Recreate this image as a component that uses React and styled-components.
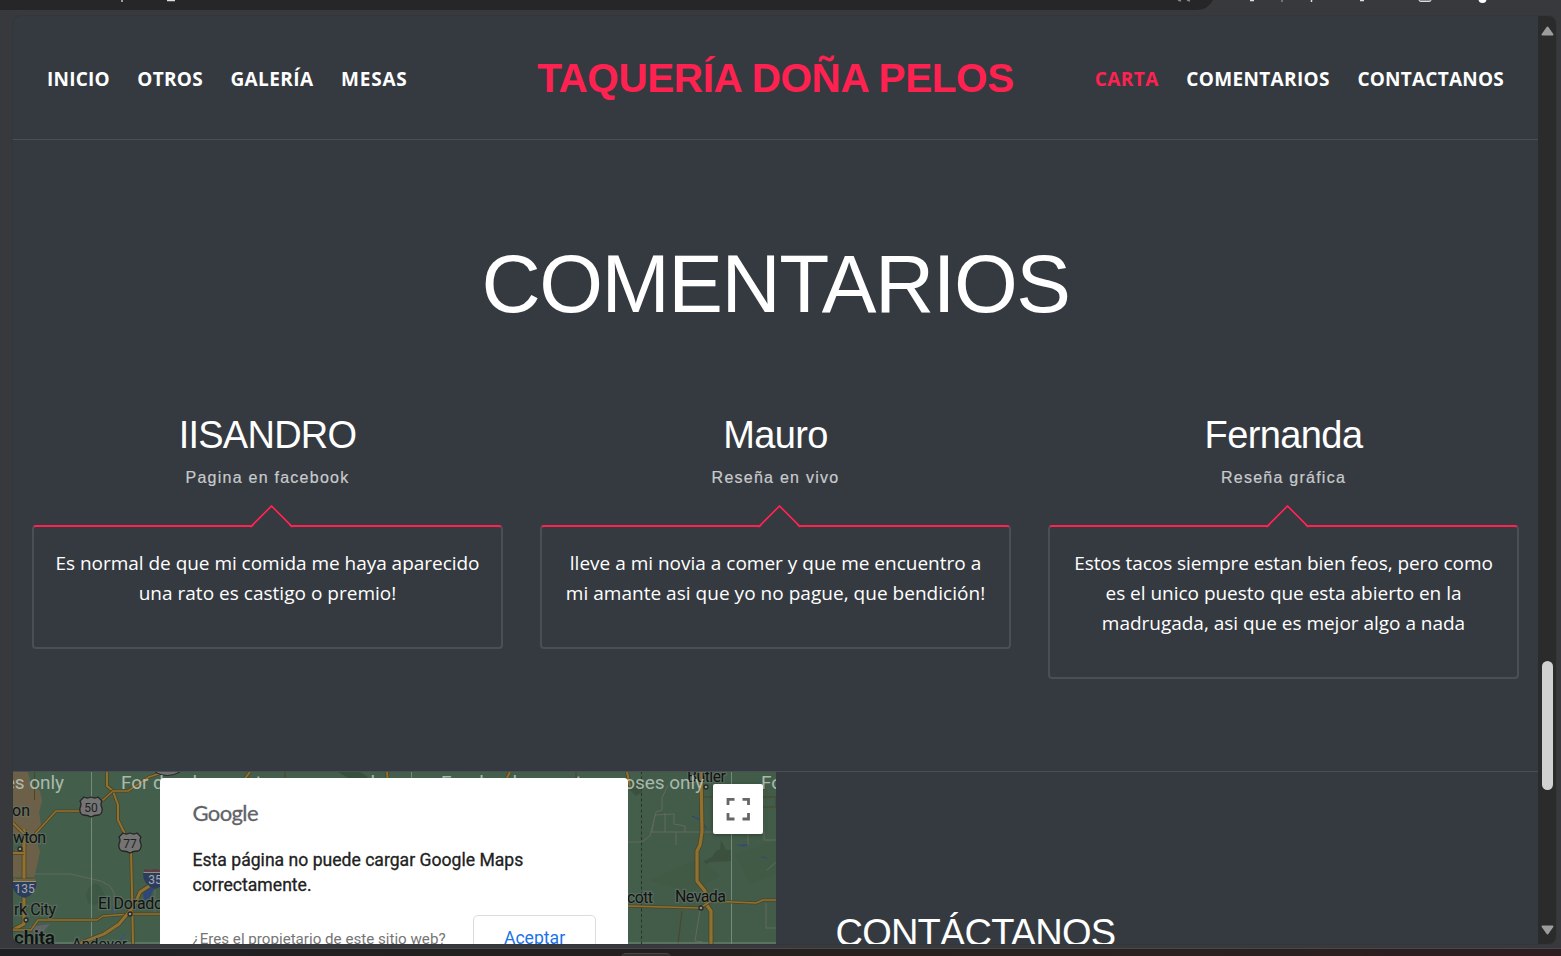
import React from "react";
import styled, { createGlobalStyle } from "styled-components";

const Global = createGlobalStyle`
  * { box-sizing: border-box; }
  html, body { margin: 0; padding: 0; overflow: hidden; background: #38393c; }
`;

const Browser = styled.div`
  width: 1561px;
  height: 956px;
  display: flex;
  flex-direction: column;
  background: #38393c;
  overflow: hidden;
`;
const Toolbar = styled.div`
  height: 16px;
  flex: none;
  svg { display: block; }
`;
const Frame = styled.div`
  height: 928px;
  flex: none;
  margin: 0 5px 0 13px;
  display: flex;
  border-radius: 8px;
  overflow: hidden;
  background: #353a41;
  box-shadow: 0 0 0 1px #33363a;
`;
const Page = styled.div`
  width: 1525px;
  flex: none;
  display: flex;
  flex-direction: column;
  overflow: hidden;
  color: #fff;
  font-family: "Open Sans", "Noto Sans", sans-serif;
`;
const ScrollTrack = styled.div`
  width: 18px;
  flex: none;
  display: flex;
  flex-direction: column;
  align-items: center;
  background: #2b2b2b;
  padding: 10px 0 9px;
`;
const ScrollThumb = styled.div`
  width: 11px;
  height: 129px;
  margin: 625px 0 auto;
  border-radius: 6px;
  background: #d1d1d1;
`;
const Taskbar = styled.div`
  margin-top: 4px;
  height: 8px;
  flex: none;
  display: flex;
  padding-left: 621px;
  background: linear-gradient(90deg, #1f2024 0%, #231f1e 35%, #2a2120 75%, #2d1c20 100%);
  border-top: 1px solid #48474a;
`;
const TaskItem = styled.div`
  width: 50px;
  height: 8px;
  margin-top: 4px;
  border-radius: 5px 5px 0 0;
  background: #33302f;
  border-top: 1px solid #4b4746;
`;

const Header = styled.header`
  height: 124px;
  flex: none;
  display: flex;
  align-items: center;
  justify-content: space-between;
  padding: 2px 34px 0;
  border-bottom: 1px solid #4a4f57;
`;
const Nav = styled.nav`
  display: flex;
  gap: 27.6px;
  width: 430px;
  justify-content: ${(p) => (p.$end ? "flex-end" : "flex-start")};
`;
const NavLink = styled.a`
  font-size: 19px;
  line-height: 30px;
  font-weight: 700;
  white-space: nowrap;
  letter-spacing: ${(p) => p.$track || 0}px;
  color: ${(p) => (p.$active ? "#ff214f" : "#fff")};
`;
const Brand = styled.h1`
  margin: 0 0 1px;
  font: 700 40.5px/48px "Liberation Sans", Arial, sans-serif;
  letter-spacing: -0.42px;
  color: #ff214f;
  white-space: nowrap;
`;

const Comments = styled.section`
  height: 632px;
  flex: none;
  border-bottom: 1px solid #4a4f57;
  padding: 96px 0 0;
`;
const Title = styled.h2`
  margin: 0;
  text-align: center;
  font: 400 82px/96px "Liberation Sans", Arial, sans-serif;
  letter-spacing: -1.5px;
`;
const Grid = styled.div`
  display: grid;
  grid-template-columns: repeat(3, 471px);
  gap: 37px;
  align-items: start;
  margin: 80px 0 0 19px;
`;
const Review = styled.article`
  text-align: center;
`;
const Author = styled.h3`
  margin: 0;
  font: 400 38px/46px "Liberation Sans", Arial, sans-serif;
  letter-spacing: ${(p) => p.$track}px;
`;
const Source = styled.p`
  margin: 8px 0 35px;
  font: 400 16px/24px "Liberation Sans", Arial, sans-serif;
  letter-spacing: 1.25px;
  color: #c8cacc;
  -webkit-text-stroke: 0.2px #c8cacc;
`;
const Bubble = styled.div`
  position: relative;
  padding: 21px 14px 39px;
  border: 2px solid #4a4f57;
  border-top-color: #ff214f;
  border-radius: 4px;
  &::before {
    content: "";
    position: absolute;
    left: 222px;
    top: -16.2px;
    width: 29px;
    height: 29px;
    transform: rotate(45deg);
    border-top: 2px solid #ff214f;
    border-left: 2px solid #ff214f;
    border-top-left-radius: 2px;
    background: linear-gradient(135deg, #353a41 60%, transparent 60%);
  }
`;
const Line = styled.span`
  display: block;
  position: relative;
  font-size: 19px;
  line-height: 30px;
  white-space: nowrap;
  letter-spacing: ${(p) => p.$track || 0}px;
`;

const Contact = styled.section`
  flex: 1;
  min-height: 0;
  display: flex;
  overflow: hidden;
`;
const MapPanel = styled.div`
  position: relative;
  width: 763px;
  height: 172px;
  flex: none;
  overflow: hidden;
  font-family: Roboto, sans-serif;
`;
const MapSvg = styled.svg`
  display: block;
  font-family: Roboto, sans-serif;
`;
const Dialog = styled.div`
  position: absolute;
  left: 147px;
  top: 6px;
  width: 468px;
  height: 200px;
  padding: 20px 32px 0 32.5px;
  border-radius: 4px;
  background: #fff;
`;
const Logo = styled.div`
  font: 400 22px/30px Lato, sans-serif;
  letter-spacing: -0.6px;
  color: #5f6368;
  -webkit-text-stroke: 0.3px #5f6368;
`;
const Message = styled.p`
  margin: 20px 0 17px;
  font-size: 17.6px;
  line-height: 25px;
  color: #212121;
  white-space: nowrap;
  -webkit-text-stroke: 0.3px #212121;
`;
const DialogFooter = styled.div`
  display: flex;
  justify-content: space-between;
  align-items: flex-start;
`;
const Owner = styled.span`
  font-size: 15.15px;
  line-height: 20px;
  padding-top: 14px;
  color: #757575;
  white-space: nowrap;
`;
const Accept = styled.button`
  width: 123px;
  height: 46px;
  border: 1px solid #dadce0;
  border-radius: 5px;
  background: #fff;
  color: #1a73e8;
  font: 400 17.6px/44px Roboto, sans-serif;
  padding: 0;
`;
const FullscreenButton = styled.button`
  position: absolute;
  left: 700px;
  top: 12px;
  width: 50px;
  height: 50px;
  padding: 13px;
  border: 0;
  border-radius: 2px;
  background: #fff;
  box-shadow: 0 1px 4px rgba(0, 0, 0, 0.35);
  svg { display: block; }
`;
const ContactTitle = styled.h2`
  margin: 138px 0 0 59.5px;
  font: 400 38px/46px "Liberation Sans", Arial, sans-serif;
  letter-spacing: -0.8px;
`;

function Road({ d, w = 2.4 }) {
  return (
    <g fill="none" strokeLinejoin="round">
      <path d={d} stroke="#4d4423" strokeWidth={w + 1.2} />
      <path d={d} stroke="#917130" strokeWidth={w - 0.4} />
    </g>
  );
}

function Label({ x, y, size = 16, bold, w, children }) {
  return (
    <text
      x={x}
      y={y}
      fontSize={size}
      fontWeight={bold ? 600 : 400}
      textLength={w}
      fill="#111312"
      stroke="#66736a"
      strokeOpacity="0.65"
      strokeWidth="2.5"
      paintOrder="stroke"
    >
      {children}
    </text>
  );
}

function Shield({ x, y, n }) {
  return (
    <g transform={`translate(${x} ${y})`}>
      <path
        d="M-7-10Q-4-8 0-10Q4-8 7-10L11-6Q9-3 11 1Q12 6 8 8Q3 8 0 10Q-3 8-8 8Q-12 6-11 1Q-9-3-11-6Z"
        fill="#747474"
        stroke="#252525"
        strokeWidth="1.3"
      />
      <text y="4.5" fontSize="12" textAnchor="middle" fill="#202020">{n}</text>
    </g>
  );
}

function Interstate({ x, y, n, top }) {
  return (
    <g transform={`translate(${x} ${y})`}>
      <path d="M-10-10Q-5-8 0-10Q5-8 10-10L12-5Q12 6 0 10Q-12 6-12-5Z" fill="#2c3c5d" />
      <path d="M-10-10Q-5-8 0-10Q5-8 10-10L11.5-7H-11.5Z" fill={top} />
      <path d="M-11.5-6.5H11.5" stroke="#8c9186" strokeWidth="1" />
      <text y="5" fontSize="12" textAnchor="middle" fill="#a5a9ad">{n}</text>
    </g>
  );
}

function MapDrawing() {
  return (
    <MapSvg width="763" height="172" viewBox="13 772 763 172">
      <rect x="13" y="771" width="763" height="174" fill="#435f4b" />
      <rect x="640" y="771" width="136" height="174" fill="#425c49" />
      <path d="M13 772H28L31 785L40 791L42 801L39 812L41 825L36 838L40 852L37 866L34 877H13Z" fill="#6d6248" />
      <path d="M13 838L20 834L24 840L22 850L13 851Z" fill="#435f4b" />
      <path d="M86 895Q92 878 100 886L105 896L96 905L88 903Z" fill="#3e5845" />
      <path d="M338 772H360L368 777L360 779H350Z" fill="#374f3d" />
      <path d="M634 780H642V792L636 796L630 790ZM702 862L712 857L716 851L720 849L721 840L726 850H731V861L710 862L703 866Z" fill="#3b513d" />
      <path d="M650 880L700 858L720 876L690 892ZM735 855L776 840V874L750 884Z" fill="#405a46" />
      <path d="M34 874L70 874L101 881L110 886L114 893V915M155 890V914M628 842H642L650 836L656 812L662 810V798L668 785M650 832H764V840H776M652 832L655 815L674 814V824L685 826V832M665 832V813M676 832V845M748 832V846M764 834V790M766 903V928H776M700 910L695 941L703 942M767 870L776 862" fill="none" stroke="#62685f" strokeWidth="1" />
      <path d="M34.500 772V800M285 772V780M576 772V780M682 911L678 944M702 797H776V807H730" fill="none" stroke="#4b4829" strokeWidth="1.2" />
      <path d="M154 888L143 890L145 900L151 895" fill="#30477a" stroke="#30477a" strokeWidth="1.500" />
      <path d="M692 816L700 820L707 829M737 845H748L742 846M761 857L767 858" fill="none" stroke="#30477a" strokeWidth="1.1" />
      <path d="M119 943L125 934M113 906V914" stroke="#3e5576" strokeWidth="1.5" />
      <path d="M29 927L50 924L43 932L35 933Z" fill="#60636a" />
      <path d="M91.5 771V944M411.5 771V944M731.5 771V944M13 943H776" stroke="#87988b" strokeWidth="1" opacity=".75" />
      <path d="M641.5 771V944" stroke="#26352a" strokeWidth="1" strokeDasharray="3 2.5" />
      <Road d="M107 772V786L113 791L118 805V820L125 834" />
      <Road d="M35 834L56 811H87L103 800L113 791H128L149 777L164 772" w={2} />
      <Road d="M131 850L132 892L133 944" />
      <Road d="M24 829V924L13 930" w={3.5} />
      <Road d="M13 823L24 834" />
      <Road d="M13 853H24" />
      <Road d="M13 930H31L38 920H97L103 916L132 914H163" w={1.8} />
      <Road d="M78 944L104 934L119 924L134 906L140 892L157 881" w={3.3} />
      <Road d="M387 772L388 784M510 772L505 782M627 772L630 786M240 785L250 772" />
      <Road d="M701 772L702 832L700 845L697 851V881L705 891L706 904L711 911V944" w={3.6} />
      <Road d="M628 906L700 908L711 901L756 903L763 900H776" w={2} />
      <path d="M155 772Q167 779 180 772" fill="#717171" stroke="#242424" strokeWidth="1" />
      <Shield x={91} y={807} n="50" />
      <Shield x={130} y={843} n="77" />
      <Interstate x={24.5} y={888} n="135" top="#79612f" />
      <Interstate x={155} y={879} n="35" top="#653c40" />
      <g fill="#8f9390" stroke="#262927" strokeWidth="1.3">
        <circle cx="20" cy="849" r="2" />
        <circle cx="26" cy="920" r="2" />
        <circle cx="130" cy="914" r="2" />
        <circle cx="706" cy="787" r="2" />
        <circle cx="701" cy="908" r="2" />
      </g>
      <Label x={12} y={816}>on</Label>
      <Label x={13} y={843} w={33}>wton</Label>
      <Label x={14} y={915} w={42}>rk City</Label>
      <Label x={14} y={944} size={19} bold w={41}>chita</Label>
      <Label x={98} y={909} w={65}>El Dorado</Label>
      <Label x={72} y={949} size={15} w={55}>Andover</Label>
      <Label x={627} y={903} w={26}>cott</Label>
      <Label x={675} y={902} w={51}>Nevada</Label>
      <Label x={687} y={782} w={39}>Butler</Label>
      <g fill="#c3d0c6" opacity=".8" fontSize="19">
        <text x="-199" y="789" textLength="263">For development purposes only</text>
        <text x="121" y="789" textLength="263">For development purposes only</text>
        <text x="441" y="789" textLength="263">For development purposes only</text>
        <text x="761" y="789" textLength="263">For development purposes only</text>
      </g>
    </MapSvg>
  );
}

const reviews = [
  {
    name: "IISANDRO",
    track: -0.75,
    source: "Pagina en facebook",
    lines: [["Es normal de que mi comida me haya aparecido", -0.03], ["una rato es castigo o premio!", 0.02]],
  },
  {
    name: "Mauro",
    track: -0.6,
    source: "Reseña en vivo",
    lines: [["lleve a mi novia a comer y que me encuentro a", 0], ["mi amante asi que yo no pague, que bendición!", 0.03]],
  },
  {
    name: "Fernanda",
    track: -0.6,
    source: "Reseña gráfica",
    lines: [
      ["Estos tacos siempre estan bien feos, pero como", -0.06],
      ["es el unico puesto que esta abierto en la", -0.02],
      ["madrugada, asi que es mejor algo a nada", -0.02],
    ],
  },
];

export default function App() {
  return (
    <Browser>
      <Global />
      <Toolbar>
        <svg width="1561" height="16">
          <path d="M0 0H1213Q1208 10 1196 10H0Z" fill="#262628" />
          <path d="M122 0V2M167 .5H175" stroke="#ddd" strokeWidth="1.3" />
          <path d="M1178 0L1181 1M1187 0L1190 1M1282 0V2" stroke="#888" strokeWidth="1.5" />
          <path d="M1250 0.500H1254M1311.500 0V2M1360 0.500H1364" stroke="#ddd" strokeWidth="1.500" />
          <path d="M1419 0Q1419 1.500 1421 1.500H1429Q1431 1.500 1431 0" fill="#888" stroke="#ddd" />
          <circle cx="1482.500" cy="-1" r="4" fill="#fff" />
        </svg>
      </Toolbar>
      <Frame>
        <Page>
          <Header>
            <Nav>
              <NavLink $track={0.2}>INICIO</NavLink>
              <NavLink $track={0.25}>OTROS</NavLink>
              <NavLink $track={0.4}>GALERÍA</NavLink>
              <NavLink $track={0.8}>MESAS</NavLink>
            </Nav>
            <Brand>TAQUERÍA DOÑA PELOS</Brand>
            <Nav $end>
              <NavLink $active $track={0.4}>CARTA</NavLink>
              <NavLink $track={0.34}>COMENTARIOS</NavLink>
              <NavLink $track={0.23}>CONTACTANOS</NavLink>
            </Nav>
          </Header>
          <Comments>
            <Title>COMENTARIOS</Title>
            <Grid>
              {reviews.map((r) => (
                <Review key={r.name}>
                  <Author $track={r.track}>{r.name}</Author>
                  <Source>{r.source}</Source>
                  <Bubble>
                    {r.lines.map(([text, track]) => (
                      <Line key={text} $track={track}>{text}</Line>
                    ))}
                  </Bubble>
                </Review>
              ))}
            </Grid>
          </Comments>
          <Contact>
            <MapPanel>
              <MapDrawing />
              <Dialog>
                <Logo>Google</Logo>
                <Message>
                  Esta página no puede cargar Google Maps
                  <br />
                  correctamente.
                </Message>
                <DialogFooter>
                  <Owner>¿Eres el propietario de este sitio web?</Owner>
                  <Accept>Aceptar</Accept>
                </DialogFooter>
              </Dialog>
              <FullscreenButton>
                <svg width="25" height="24" fill="none" stroke="#666" strokeWidth="2.800">
                  <path d="M2 8V2.400H8.500M16.500 2.400H22.500V8M22.500 16V22H16.500M8.500 22H2V16" />
                </svg>
              </FullscreenButton>
            </MapPanel>
            <ContactTitle>CONTÁCTANOS</ContactTitle>
          </Contact>
        </Page>
        <ScrollTrack>
          <svg width="14" height="10"><path d="M7.500 1.500L12.500 8.500H2.500Z" fill="#9d9d9d" stroke="#9d9d9d" strokeWidth="2" strokeLinejoin="round" /></svg>
          <ScrollThumb />
          <svg width="14" height="10"><path d="M7.500 8.500L12.500 1.500H2.500Z" fill="#9d9d9d" stroke="#9d9d9d" strokeWidth="2" strokeLinejoin="round" /></svg>
        </ScrollTrack>
      </Frame>
      <Taskbar><TaskItem /></Taskbar>
    </Browser>
  );
}
